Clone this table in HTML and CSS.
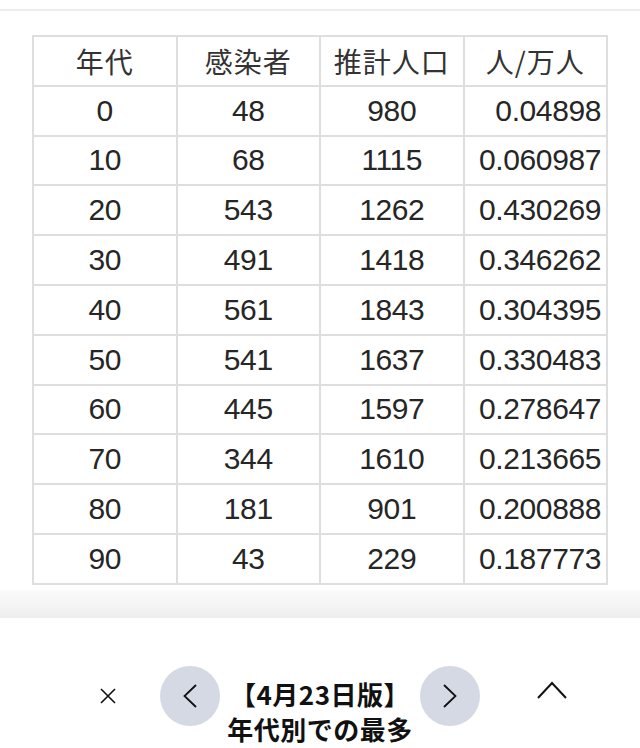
FILE: index.html
```html
<!DOCTYPE html>
<html lang="ja">
<head>
<meta charset="utf-8">
<title>年代別での最多</title>
<link rel="stylesheet" href="styles.css">
</head>
<body>
<div class="topbar"></div>
<div class="sheet">
  <table class="grid">
    <thead>
      <tr><th>年代</th><th>感染者</th><th>推計人口</th><th>人/万人</th></tr>
    </thead>
    <tbody>
      <tr><td>0</td><td>48</td><td>980</td><td class="r">0.04898</td></tr>
      <tr><td>10</td><td>68</td><td>1115</td><td class="r">0.060987</td></tr>
      <tr><td>20</td><td>543</td><td>1262</td><td class="r">0.430269</td></tr>
      <tr><td>30</td><td>491</td><td>1418</td><td class="r">0.346262</td></tr>
      <tr><td>40</td><td>561</td><td>1843</td><td class="r">0.304395</td></tr>
      <tr><td>50</td><td>541</td><td>1637</td><td class="r">0.330483</td></tr>
      <tr><td>60</td><td>445</td><td>1597</td><td class="r">0.278647</td></tr>
      <tr><td>70</td><td>344</td><td>1610</td><td class="r">0.213665</td></tr>
      <tr><td>80</td><td>181</td><td>901</td><td class="r">0.200888</td></tr>
      <tr><td>90</td><td>43</td><td>229</td><td class="r">0.187773</td></tr>
    </tbody>
  </table>
</div>
<div class="shade"></div>
<div class="bar">
  <button class="icon close" aria-label="閉じる">
    <svg width="16" height="16" viewBox="0 0 16 16"><path d="M1 1L15 15M15 1L1 15" stroke="#111" stroke-width="1.6" fill="none"/></svg>
  </button>
  <button class="circle prev" aria-label="前へ">
    <svg width="14" height="24" viewBox="0 0 14 24"><path d="M13 1L1.5 12L13 23" stroke="#111" stroke-width="1.8" fill="none"/></svg>
  </button>
  <div class="title">
    <div class="line">【4月23日版】</div>
    <div class="line">年代別での最多</div>
  </div>
  <button class="circle next" aria-label="次へ">
    <svg width="14" height="24" viewBox="0 0 14 24"><path d="M1 1L12.5 12L1 23" stroke="#111" stroke-width="1.8" fill="none"/></svg>
  </button>
  <button class="icon up" aria-label="上へ">
    <svg width="30" height="18" viewBox="0 0 30 18"><path d="M1 17L15 2L29 17" stroke="#111" stroke-width="2" fill="none"/></svg>
  </button>
</div>
</body>
</html>
```
FILE: styles.css
```css
html, body {
  margin: 0;
  padding: 0;
  background: #fff;
}
body {
  width: 640px;
  height: 748px;
  overflow: hidden;
  font-family: "Liberation Sans", "Noto Sans CJK JP", sans-serif;
}
.topbar {
  height: 9px;
  border-bottom: 2px solid #ececec;
}
.sheet {
  padding: 24px 0 0 32px;
  height: 555px;
  background: #fff;
}
.grid {
  border-collapse: collapse;
  table-layout: fixed;
  width: 576px;
}
.grid th, .grid td {
  height: 47.8px;
  padding: 0;
  border: 2px solid #dedede;
  text-align: center;
  vertical-align: middle;
  color: #262626;
}
.grid th {
  font-family: "Noto Sans CJK JP", sans-serif;
  font-weight: 400;
  font-size: 28px;
  color: #333;
  letter-spacing: 1px;
}
.grid td {
  font-size: 30px;
  letter-spacing: -0.4px;
}
.grid td.r {
  text-align: right;
  padding-right: 5px;
}
.shade {
  height: 28px;
  background: linear-gradient(to bottom, #fbfbfb, #eeeeee);
}
.bar {
  height: 131px;
  background: #fff;
  display: flex;
  align-items: flex-start;
  padding-top: 48px;
  padding-left: 88px;
  box-sizing: border-box;
}
button {
  border: 0;
  padding: 0;
  background: none;
  display: flex;
  align-items: center;
  justify-content: center;
}
.icon.close {
  width: 40px;
  height: 60px;
  margin-right: 32px;
}
.circle {
  width: 60px;
  height: 60px;
  border-radius: 50%;
  background: #d4d9e3;
}
.title {
  width: 200px;
  margin-top: 10px;
  font-family: "Noto Sans CJK JP", sans-serif;
  font-weight: 700;
  font-size: 26px;
  line-height: 36px;
  text-align: center;
  color: #111;
  letter-spacing: 0.5px;
}
.title .line {
  height: 35px;
  overflow: visible;
}
.icon.up {
  width: 40px;
  height: 48px;
  margin-left: 52px;
}
```
